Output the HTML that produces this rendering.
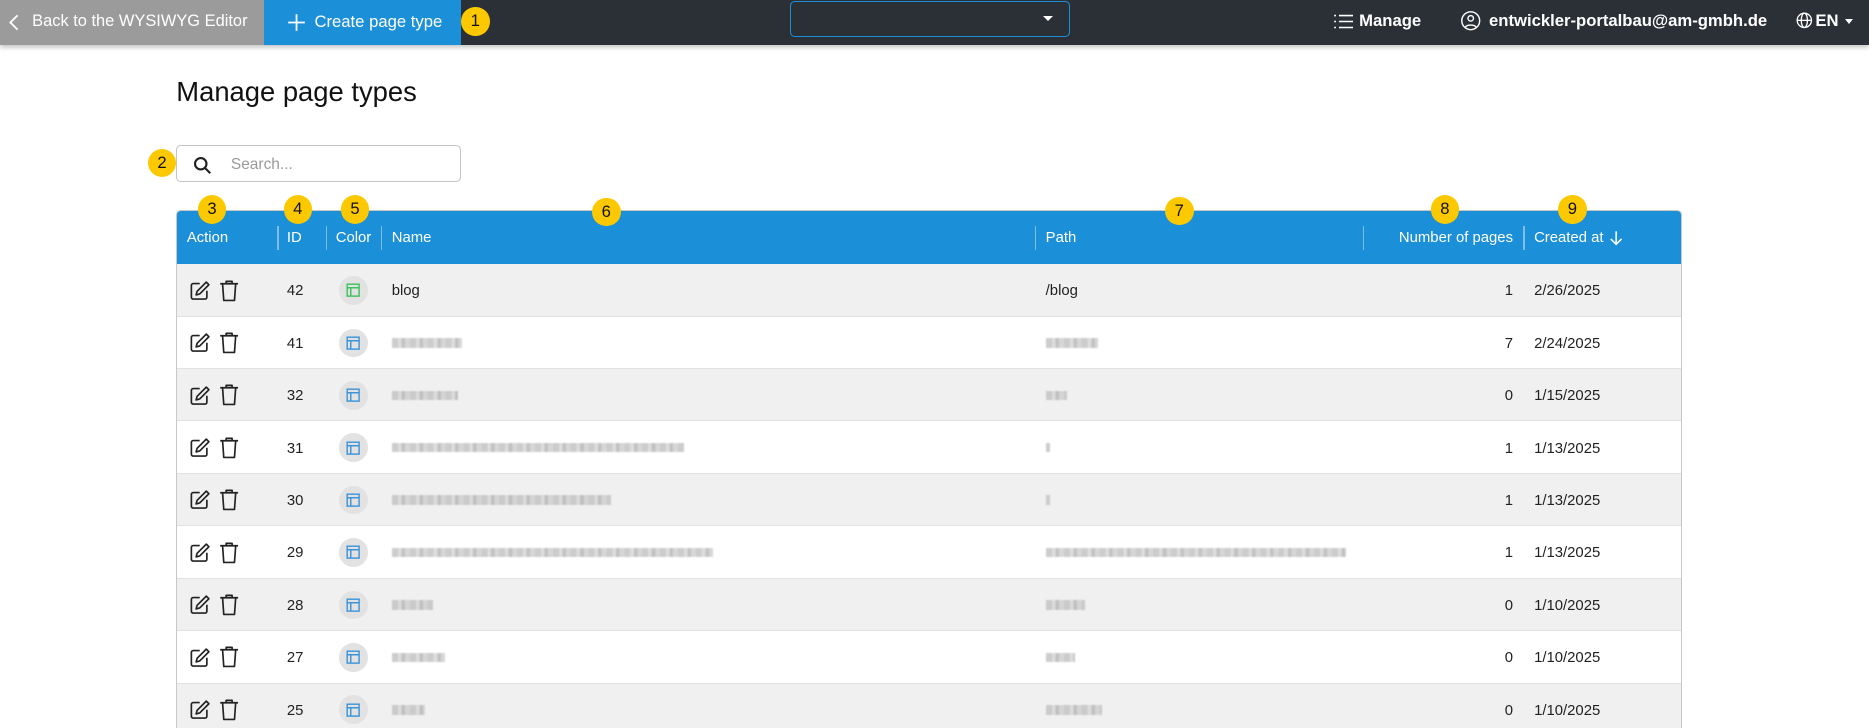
<!DOCTYPE html>
<html><head><meta charset="utf-8"><style>
*{box-sizing:border-box;margin:0;padding:0}
html,body{width:1869px;height:728px;overflow:hidden;background:#fff}
#root{zoom:1.1912;width:1569px;height:612px;position:relative;font-family:"Liberation Sans",Arial,sans-serif;color:#222}
.top{position:absolute;left:0;top:0;width:1569px;height:38px;background:#2b2f36;box-shadow:0 2px 4px rgba(0,0,0,.25);color:#fff;font-size:14px}
.abs{position:absolute}
.back{left:0;top:0;width:222px;height:38px;background:#9b9b9b;color:#fff}
.create{left:222px;top:0;width:165px;height:38px;background:#1b8fd8}
.badge{position:absolute;width:24px;height:24px;border-radius:50%;background:#fcc900;color:#111;font-size:14px;text-align:center;line-height:24px;font-family:"Liberation Sans",sans-serif}
.tbl{position:absolute;left:148px;top:176px;width:1264px;height:440px;border:1px solid #c8c8c8;border-radius:4px;overflow:hidden}
.hd{position:absolute;left:0;top:0;width:100%;height:45px;background:#1b8fd8;color:#fff;font-size:12.5px}
.hd span{position:absolute;top:16px}
.sep{position:absolute;top:13px;width:1px;height:20px;background:#7fbde8}
.row{position:absolute;left:0;width:100%;height:44px;border-bottom:1px solid #e2e2e2;font-size:12.5px}
.row span{position:absolute;top:16px}
.blur{position:absolute;top:18px;height:8px;background:repeating-linear-gradient(90deg,#c4c4c4 0 5px,#d8d8d8 5px 8px,#b8b8b8 8px 11px,#d0d0d0 11px 15px);filter:blur(.6px);opacity:.85}
.circ{position:absolute;left:136px;top:10px;width:24px;height:24px;border-radius:50%;background:#e2e2e2}
</style></head><body><div id="root">
<div class="top">
 <div class="abs back"><svg class="abs" style="left:7px;top:11px" width="10" height="16" viewBox="0 0 10 16"><path d="M8 2L2 8l6 6" fill="none" stroke="#fff" stroke-width="1.5"/></svg><span class="abs" style="left:27px;top:10px;font-size:13.8px">Back to the WYSIWYG Editor</span></div>
 <div class="abs create"><svg class="abs" style="left:19px;top:11px" width="16" height="16"><path d="M8 1v14M1 8h14" stroke="#fff" stroke-width="1.5"/></svg><span class="abs" style="left:42px;top:10px;font-size:14px">Create page type</span></div>
 <div class="abs" style="left:663px;top:1px;width:235px;height:30px;border:1px solid #1b8fd8;border-radius:4px"><div class="abs" style="left:212px;top:12px;border-left:5px solid transparent;border-right:5px solid transparent;border-top:5px solid #fff"></div></div>
 <svg class="abs" style="left:1119px;top:10px" width="17" height="16"><g stroke="#fff" stroke-width="1.3"><path d="M5 3h12M5 8h12M5 13h12M1 3h1.5M1 8h1.5M1 13h1.5"/></g></svg>
 <span class="abs" style="left:1141px;top:9px;font-weight:bold">Manage</span>
 <svg class="abs" style="left:1226px;top:8px" width="18" height="18"><circle cx="9" cy="9" r="7.5" fill="none" stroke="#fff" stroke-width="1.2"/><circle cx="9" cy="7" r="2.3" fill="none" stroke="#fff" stroke-width="1.2"/><path d="M4.5 14.5c1-2.5 8-2.5 9 0" fill="none" stroke="#fff" stroke-width="1.2"/></svg>
 <span class="abs" style="left:1250px;top:9px;font-weight:bold">entwickler-portalbau@am-gmbh.de</span>
 <svg class="abs" style="left:1508px;top:10px" width="14" height="14"><g fill="none" stroke="#fff" stroke-width="1.1"><circle cx="7" cy="7" r="6"/><ellipse cx="7" cy="7" rx="2.6" ry="6"/><path d="M1 7h12"/></g></svg>
 <span class="abs" style="left:1524px;top:9px;font-weight:bold">EN</span>
 <div class="abs" style="left:1549px;top:16px;border-left:4px solid transparent;border-right:4px solid transparent;border-top:5px solid #fff"></div>
</div>
<div class="badge" style="left:387px;top:6px">1</div>
<div class="abs" style="left:148px;top:64px;font-size:23px;color:#111">Manage page types</div>
<div class="abs" style="left:148px;top:122px;width:239px;height:31px;border:1px solid #c4c4c4;border-radius:4px">
 <svg class="abs" style="left:13px;top:8px" width="16" height="16"><circle cx="6.5" cy="6.5" r="4.8" fill="none" stroke="#222" stroke-width="1.8"/><path d="M10 10l4.5 4.5" stroke="#222" stroke-width="1.8"/></svg>
 <span class="abs" style="left:45px;top:8px;font-size:13px;color:#9a9a9a">Search...</span></div>
<div class="badge" style="left:124px;top:125px">2</div>
<div class="tbl">
 <div class="hd">
  <span style="left:8px">Action</span><div class="sep" style="left:84px"></div>
  <span style="left:92px">ID</span><div class="sep" style="left:125px"></div>
  <span style="left:133px">Color</span><div class="sep" style="left:171px"></div>
  <span style="left:180px">Name</span><div class="sep" style="left:720px"></div>
  <span style="left:729px">Path</span><div class="sep" style="left:995px"></div>
  <span style="right:141px">Number of pages</span><div class="sep" style="left:1130px"></div>
  <span style="left:1139px">Created at</span>
  <svg class="abs" style="left:1202px;top:16px" width="12" height="14"><path d="M6 1v11M1.5 7.5L6 12l4.5-4.5" fill="none" stroke="#fff" stroke-width="1.3"/></svg>
 </div>
 <div id="rows"></div>
</div>
<div class="badge" style="left:166px;top:164px">3</div>
<div class="badge" style="left:238px;top:164px">4</div>
<div class="badge" style="left:286px;top:164px">5</div>
<div class="badge" style="left:497px;top:166px">6</div>
<div class="badge" style="left:978px;top:165px">7</div>
<div class="badge" style="left:1201px;top:164px">8</div>
<div class="badge" style="left:1308px;top:164px">9</div>
<script>
var d=[["42","blog","/blog","1","2/26/2025",0,0],["41",null,null,"7","2/24/2025",59,44],["32",null,null,"0","1/15/2025",56,18],["31",null,null,"1","1/13/2025",245,4],["30",null,null,"1","1/13/2025",184,4],["29",null,null,"1","1/13/2025",270,252],["28",null,null,"0","1/10/2025",35,33],["27",null,null,"0","1/10/2025",45,25],["25",null,null,"0","1/10/2025",28,47]];
var h="";
d.forEach(function(r,i){
 var bg=i%2==0?"#f0f0f0":"#fff";var c=i==0?"#3cc35a":"#3c94d8";
 h+='<div class="row" style="top:'+(45+i*44)+'px;background:'+bg+'">'+
 '<svg class="abs" style="left:10px;top:13px" width="19" height="19"><path d="M9 3H3.5A1.5 1.5 0 0 0 2 4.5v10A1.5 1.5 0 0 0 3.5 16h10a1.5 1.5 0 0 0 1.5-1.5V9" fill="none" stroke="#222" stroke-width="1.4"/><path d="M14.5 1.8l2.2 2.2L9 11.7l-3 .8.8-3z" fill="none" stroke="#222" stroke-width="1.4" stroke-linejoin="round"/></svg>'+
 '<svg class="abs" style="left:35px;top:12px" width="17" height="20"><path d="M1 4h15M6 4V2h5v2M3 4l1 14h9l1-14" fill="none" stroke="#222" stroke-width="1.4" stroke-linejoin="round"/></svg>'+
 '<span style="left:92px">'+r[0]+'</span>'+
 '<div class="circ"><svg class="abs" style="left:6px;top:6px" width="12" height="12"><rect x="1" y="1" width="10" height="10" fill="none" stroke="'+c+'" stroke-width="1.2"/><path d="M1 4h10M4 4v7" stroke="'+c+'" stroke-width="1.2"/></svg></div>'+
 (r[1]?'<span style="left:180px">'+r[1]+'</span>':'<div class="blur" style="left:180px;width:'+r[5]+'px"></div>')+
 (r[2]?'<span style="left:729px">'+r[2]+'</span>':'<div class="blur" style="left:729px;width:'+r[6]+'px"></div>')+
 '<span style="right:141px">'+r[3]+'</span><span style="left:1139px">'+r[4]+'</span></div>';
});
document.getElementById("rows").innerHTML=h;
</script>
</div></body></html>
